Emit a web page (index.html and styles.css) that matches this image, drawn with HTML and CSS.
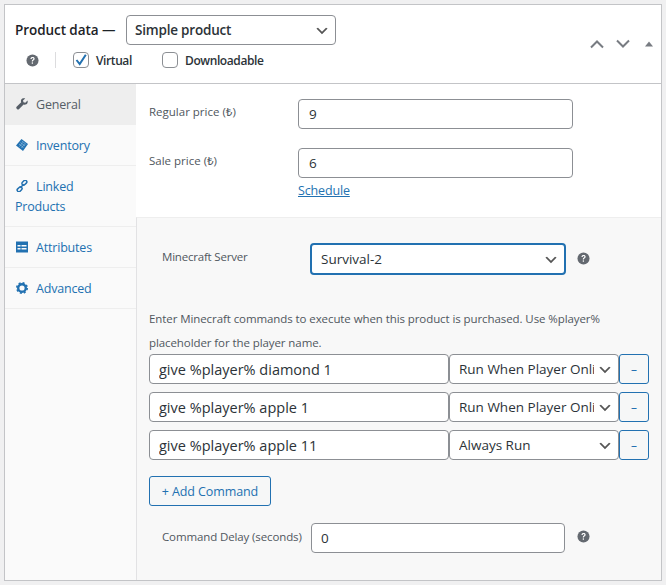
FILE: index.html
```html
<!DOCTYPE html>
<html>
<head>
    <title>Product data</title>
    <link rel="stylesheet" href="styles.css">
</head>
<body>
    <svg class="icon-defs" width="0" height="0">
        <symbol id="help" viewBox="0 0 14 14">
            <circle cx="7" cy="7" r="6.5" fill="#646970"/>
            <path d="M4.8 5.3c.1-1.300 1-2 2.300-2s2.200.7 2.200 1.800c0 1.700-1.900 1.500-1.900 3H6.200c0-2 1.800-1.900 1.800-2.900 0-.5-.4-.8-.9-.8-.6 0-.9.400-1 .9z" fill="#fff"/>
            <rect x="6.200" y="9" width="1.300" height="1.500" fill="#fff"/>
        </symbol>
    </svg>
    <div class="postbox">
        <div class="postbox-header">
            <div class="header-left">
                <div class="title-row">
                    <span class="title">Product data —</span>
                    <select class="product-type">
                        <option>Simple product</option>
                    </select>
                </div>
                <div class="type-row">
                    <svg class="help help-first"><use href="#help"/></svg>
                    <span class="divider"></span>
                    <label class="check check-virtual">
                        <span class="box">
                            <svg width="16" height="16" viewBox="0 0 16 16"><path d="M3.500 8l3.200 4L12.800 2.800" fill="none" stroke="#2271b1" stroke-width="2"/></svg>
                        </span>
                        Virtual
                    </label>
                    <label class="check">
                        <span class="box"></span>
                        Downloadable
                    </label>
                </div>
            </div>
            <div class="handles">
                <svg width="16" height="10" viewBox="0 0 16 10"><path d="M2 8.500l6-6 6 6" fill="none" stroke="#787c82" stroke-width="2"/></svg>
                <svg width="16" height="10" viewBox="0 0 16 10"><path d="M2 1.500l6 6 6-6" fill="none" stroke="#787c82" stroke-width="2"/></svg>
                <svg class="handle-last" width="8" height="6" viewBox="0 0 10 6"><path d="M5 0l5 6H0z" fill="#787c82"/></svg>
            </div>
        </div>
        <div class="panel-wrap">
            <ul class="tabs">
                <li class="tab active">
                    <svg class="tab-icon" viewBox="0 0 12 12"><path d="M11.500 2.600L9.300 4.700 7.500 4.200 7 2.500 9.200.4C7.700-.2 6 .3 5.300 1.500c-.5.900-.5 1.900-.1 2.700L.6 8.800c-.5.500-.5 1.300 0 1.800l.6.600c.5.500 1.200.5 1.700 0l4.700-4.600c.9.300 1.900.2 2.700-.3 1.200-.8 1.700-2.400 1.200-3.700z" fill="#555d66"/></svg>
                    <a>General</a>
                </li>
                <li class="tab">
                    <svg class="tab-icon" viewBox="0 0 12 12"><path d="M5.500 0L12 5 7 12 0 6.500z" fill="#2271b1"/><path d="M3 5l4.500 3.500M4.500 3.500L9 7M5.800 2l4.500 3.500M3.500 7.500l3-4M5.500 9l3-4" stroke="#9cc3e0" stroke-width=".6"/></svg>
                    <a>Inventory</a>
                </li>
                <li class="tab">
                    <svg class="tab-icon" viewBox="0 0 12 12"><g fill="none" stroke="#2271b1" stroke-width="1.500"><rect x="5.600" y=".9" width="5.500" height="3.400" rx="1.700" transform="rotate(-45 8.400 2.600)"/><rect x=".9" y="7.700" width="5.500" height="3.400" rx="1.700" transform="rotate(-45 3.600 9.400)"/><path d="M4.300 7.700l3.400-3.400"/></g></svg>
                    <a>Linked Products</a>
                </li>
                <li class="tab">
                    <svg class="tab-icon" viewBox="0 0 12 12"><rect width="12" height="11" y=".5" fill="#2271b1"/><path d="M1.500 4h3v1.500h-3zM1.500 7h3v1.500h-3zM5.500 4h5v1.500h-5zM5.500 7h5v1.500h-5z" fill="#fafafa"/></svg>
                    <a>Attributes</a>
                </li>
                <li class="tab">
                    <svg class="tab-icon" viewBox="0 0 12 12"><circle cx="6" cy="6" r="3.800" fill="none" stroke="#2271b1" stroke-width="2.400"/><circle cx="6" cy="6" r="5.200" fill="none" stroke="#2271b1" stroke-width="1.600" stroke-dasharray="2 2.080"/></svg>
                    <a>Advanced</a>
                </li>
            </ul>
            <div class="panel">
                <div class="pricing">
                    <div class="price-row">
                        <label class="price-label">Regular price (₺)</label>
                        <input class="text price-input" type="text" value="9">
                    </div>
                    <div class="price-row">
                        <label class="price-label">Sale price (₺)</label>
                        <div>
                            <input class="text price-input" type="text" value="6">
                            <a class="schedule">Schedule</a>
                        </div>
                    </div>
                </div>
                <div class="minecraft">
                    <div class="server-row">
                        <label class="mc-label">Minecraft Server</label>
                        <select class="server-select">
                            <option>Survival-2</option>
                        </select>
                        <svg class="help"><use href="#help"/></svg>
                    </div>
                    <p class="commands-note">Enter Minecraft commands to execute when this product is purchased. Use %player% placeholder for the player name.</p>
                    <div class="command-list">
                        <div class="command">
                            <input class="text command-input" type="text" value="give %player% diamond 1">
                            <select class="command-when"><option>Run When Player Online</option></select>
                            <button class="remove">–</button>
                        </div>
                        <div class="command">
                            <input class="text command-input" type="text" value="give %player% apple 1">
                            <select class="command-when"><option>Run When Player Online</option></select>
                            <button class="remove">–</button>
                        </div>
                        <div class="command">
                            <input class="text command-input" type="text" value="give %player% apple 11">
                            <select class="command-when"><option>Always Run</option></select>
                            <button class="remove">–</button>
                        </div>
                    </div>
                    <button class="add-command">+ Add Command</button>
                    <div class="delay-row">
                        <label class="mc-label delay-label">Command Delay (seconds)</label>
                        <input class="text delay-input" type="text" value="0">
                        <svg class="help"><use href="#help"/></svg>
                    </div>
                </div>
            </div>
        </div>
    </div>
</body>
</html>
```

FILE: styles.css
```css
* {
    box-sizing: border-box;
}
html, body {
    height: 100%;
}
body {
    margin: 0;
    padding: 4px 4px 4px 4px;
    background-color: #f0f0f1;
    color: #50575e;
    font-family: "Open Sans", "Noto Sans", sans-serif;
    font-size: 12px;
    overflow: hidden;
}
.icon-defs {
    position: absolute;
}
.postbox {
    width: 658px;
    height: 577px;
    background-color: #fff;
    border: 1px solid #c3c4c7;
    display: flex;
    flex-direction: column;
}
.postbox-header {
    height: 79px;
    flex: none;
    display: flex;
    justify-content: space-between;
    border-bottom: 1px solid #c3c4c7;
}
.header-left {
    padding: 10px 0 0 10px;
}
.title-row {
    display: flex;
    align-items: center;
}
.title {
    width: 111px;
    font-size: 13.500px;
    font-weight: 600;
    color: #1d2327;
    letter-spacing: -0.07px;
    white-space: nowrap;
}
select, input.text {
    font-family: inherit;
    color: #2c3338;
    background-color: #fff;
    border: 1px solid #8c8f94;
    border-radius: 4px;
    outline: none;
    margin: 0;
}
select {
    appearance: none;
    background-image: url("data:image/svg+xml,%3Csvg xmlns='http://www.w3.org/2000/svg' width='20' height='20'%3E%3Cpath d='M5 6l5 5 5-5 2 1-7 7-7-7z' fill='%23555'/%3E%3C/svg%3E");
    background-repeat: no-repeat;
    background-position: right 5px top 55%;
    background-size: 16px 16px;
}
.product-type {
    width: 210px;
    height: 30px;
    padding: 0 24px 0 8px;
    font-size: 13.500px;
    font-weight: 600;
    letter-spacing: -0.2px;
}
.type-row {
    display: flex;
    align-items: center;
    height: 16px;
    margin-top: 7px;
    padding-left: 11px;
}
.help {
    width: 13px;
    height: 13px;
    flex: none;
    margin-left: 11px;
}
.help-first {
    margin-left: 0;
}
.divider {
    width: 1px;
    height: 16px;
    background-color: #dcdcde;
    margin: 0 17px 0 16px;
}
.check {
    display: flex;
    align-items: center;
    gap: 7px;
    font-size: 12px;
    font-weight: 600;
    letter-spacing: -0.4px;
    color: #2c3338;
}
.check-virtual {
    width: 89px;
}
.box {
    width: 16px;
    height: 16px;
    display: block;
    border: 1px solid #8c8f94;
    border-radius: 4px;
    background-color: #fff;
    flex: none;
}
.box svg {
    display: block;
    margin: -1px;
}
.handles {
    display: flex;
    align-items: center;
    gap: 10px;
    padding: 0 8px 0 0;
}
.handle-last {
    margin-left: 4px;
}
.panel-wrap {
    flex: 1;
    display: flex;
    min-height: 0;
}
.tabs {
    width: 131px;
    margin: 0;
    padding: 0;
    list-style-type: none;
    background-color: #fafafa;
    flex: none;
}
.tab {
    padding: 11px 10px 9px 10px;
    min-height: 41px;
    line-height: 20px;
    font-size: 12.500px;
    border-bottom: 1px solid #eee;
    color: #2271b1;
    letter-spacing: -0.2px;
}
.tab a {
    color: inherit;
}
.tab.active {
    background-color: #eee;
    color: #555d66;
}
.tab-icon {
    width: 12px;
    height: 12px;
    margin-left: 1px;
    margin-right: 5px;
    vertical-align: -0.5px;
    margin-top: -4px;
}
.panel {
    flex: 1;
    display: flex;
    flex-direction: column;
    min-width: 0;
}
.pricing {
    height: 133px;
    flex: none;
    padding: 15px 0 0 12px;
    border-left: 1px solid #fff;
}
.price-row {
    display: flex;
    margin-bottom: 19px;
}
.price-label {
    width: 149px;
    flex: none;
    font-size: 11.500px;
    line-height: 26px;
}
.text {
    display: block;
    font-size: 13.500px;
    padding: 0 10px;
}
.price-input {
    width: 275px;
    height: 30px;
}
.schedule {
    display: block;
    margin-top: 3px;
    color: #2271b1;
    text-decoration: underline;
    font-size: 12.500px;
    line-height: 20px;
    letter-spacing: -0.15px;
}
.minecraft {
    flex: 1;
    background-color: #f8f8f8;
    border-top: 1px solid #eee;
    border-left: 1px solid #e2e2e4;
    padding: 25px 0 0 12px;
}
.server-row {
    display: flex;
    align-items: center;
    height: 32px;
}
.mc-label {
    margin-left: 13px;
    font-size: 11.500px;
    flex: none;
}
.server-row .mc-label {
    width: 148px;
    margin-top: -5px;
    letter-spacing: -0.2px;
}
.server-select {
    width: 256px;
    height: 32px;
    padding: 0 24px 0 9px;
    border: 2px solid #2271b1;
    font-size: 13.500px;
}
.server-row .help {
    margin-top: -1px;
}
.commands-note {
    margin: 32px 0 -1px 0;
    width: 470px;
    font-size: 11.500px;
    line-height: 24px;
    letter-spacing: -0.085px;
}
.command-list {
    display: flex;
    flex-direction: column;
    gap: 8px;
}
.command {
    display: flex;
}
.command-input {
    width: 300px;
    height: 30px;
    padding: 0 9px;
    font-size: 14.500px;
}
.command-when {
    width: 170px;
    height: 30px;
    padding: 0 24px 0 9px;
    font-size: 13.500px;
    white-space: nowrap;
    overflow: hidden;
}
.remove {
    width: 30px;
    height: 30px;
    margin: 0;
    padding: 0;
    background-color: #f6f7f7;
    color: #2271b1;
    border: 1px solid #2271b1;
    border-radius: 3px;
    font-family: inherit;
    font-size: 12px;
}
.add-command {
    display: block;
    width: 122px;
    height: 30px;
    margin-top: 16px;
    padding: 0;
    background-color: #f6f7f7;
    color: #2271b1;
    border: 1px solid #2271b1;
    border-radius: 3px;
    font-family: inherit;
    font-size: 12.500px;
    letter-spacing: -0.1px;
}
.delay-row {
    display: flex;
    align-items: center;
    margin-top: 17px;
    height: 30px;
}
.delay-label {
    width: 149px;
    margin-top: -4px;
    letter-spacing: -0.12px;
    white-space: nowrap;
}
.delay-input {
    width: 254px;
    height: 30px;
    font-size: 13.500px;
    padding: 0 9px;
}
.delay-row .help {
    margin-left: 12px;
    margin-top: -3px;
}
```
